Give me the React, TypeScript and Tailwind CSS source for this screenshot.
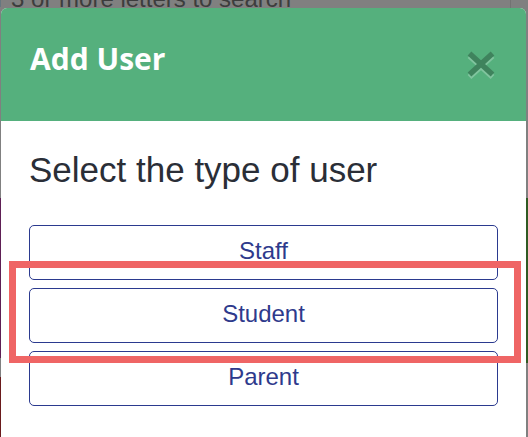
const userTypes = ['Staff', 'Student', 'Parent']

// ── Close icon (bootstrap-like: faded, with a light shadow) ──────────────────
function CloseIcon() {
  return (
    <svg width="28" height="29" viewBox="0 0 28 29" className="opacity-25">
      <g strokeWidth="5.5" strokeLinecap="butt">
        <path d="M2.5 4.5 L25.5 25.5 M25.5 4.5 L2.5 25.5" stroke="#ffffff" transform="translate(0 1.5)" />
        <path d="M2.5 3.5 L25.5 24.5 M25.5 3.5 L2.5 24.5" stroke="#000000" />
      </g>
    </svg>
  )
}

export default function App() {
  return (
    <div
      className="relative w-[528px] h-[437px] overflow-hidden bg-[#808080]"
      style={{ fontFamily: '"Liberation Sans", Arial, sans-serif' }}
    >
      {/* ── Page behind the overlay ── */}
      <div className="flex h-full">
        <div className="flex flex-col w-[1px]">
          <div className="h-[198px]" />
          <div className="h-[160px] bg-[#5e1f55]" />
          <div className="h-[19px]" />
          <div className="flex-1 bg-[#6a1a1c]" />
        </div>
        <div className="flex-1 flex">
          <div className="flex-1 -mt-[13px] -ml-[54px] text-[24px] leading-[24px] text-[#3d3d3d] whitespace-nowrap">
            Enter 3 or more letters to search
          </div>
        </div>
        <div className="w-px h-[10px] bg-[#737373] mr-[15px]" />
        <div className="flex flex-col w-[2px]">
          <div className="h-[198px]" />
          <div className="h-[165px] bg-[#2f5a22]" />
        </div>
      </div>

      {/* ── Modal ── */}
      <div className="absolute left-[1px] top-[8px] w-[525px] h-[440px] bg-white rounded-t-[6px] overflow-hidden">
        <div className="flex items-start justify-between h-[113px] bg-[#55b07d] pl-[29px] pr-[31px]">
          <h2
            className="mt-[36px] text-[30px] leading-[30px] font-bold text-white"
            style={{ fontFamily: '"Open Sans", sans-serif' }}
          >
            Add User
          </h2>
          <div className="mt-[42px]">
            <CloseIcon />
          </div>
        </div>

        <div className="px-[28px]">
          <h3 className="mt-[31px] text-[35px] leading-[35px] text-[#2a2e37]">
            Select the type of user
          </h3>
          <div className="mt-[38px] flex flex-col gap-[8px] w-[469px]">
            {userTypes.map(t => (
              <button
                key={t}
                className="h-[55px] flex items-center justify-center pb-[4px] border border-[#2b3a8f] rounded-[5px] text-[24px] leading-[24px] text-[#2e3a8c]"
              >
                {t}
              </button>
            ))}
          </div>
        </div>
      </div>

      {/* ── Annotation highlight ── */}
      <div className="absolute left-[9px] top-[261px] w-[512px] h-[102px] border-[7px] border-[#ef6565]" />
    </div>
  )
}
